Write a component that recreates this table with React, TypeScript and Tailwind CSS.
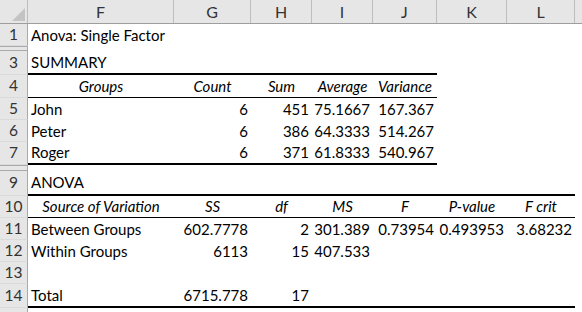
type Cell = {
  text?: string;
  align?: "left" | "center" | "right";
  italic?: boolean;
};

type Row = {
  num: string;
  h: string;
  cells?: Cell[];
  line?: "thin" | "thick";
  span?: number;
  hidden?: boolean;
};

const colWidths = ["w-[146px]", "w-[77px]", "w-[61px]", "w-[61px]", "w-[64px]", "w-[70px]", "w-[68px]"];
const colNames = ["F", "G", "H", "I", "J", "K", "L"];

const L = (text: string): Cell => ({ text, align: "left" });
const R = (text: string): Cell => ({ text, align: "right" });
const H = (text: string): Cell => ({ text, align: "center", italic: true });

const rows: Row[] = [
  { num: "1", h: "h-[22px]", cells: [L("Anova: Single Factor")] },
  { num: "2", h: "h-[5px]", hidden: true },
  { num: "3", h: "h-[24px]", cells: [L("SUMMARY")], line: "thick", span: 5 },
  { num: "4", h: "h-[23px]", cells: [H("Groups"), H("Count"), H("Sum"), H("Average"), H("Variance")], line: "thin", span: 5 },
  { num: "5", h: "h-[22px]", cells: [L("John"), R("6"), R("451"), R("75.1667"), R("167.367")] },
  { num: "6", h: "h-[22px]", cells: [L("Peter"), R("6"), R("386"), R("64.3333"), R("514.267")] },
  { num: "7", h: "h-[23px]", cells: [L("Roger"), R("6"), R("371"), R("61.8333"), R("540.967")], line: "thick", span: 5 },
  { num: "8", h: "h-[6px]", hidden: true },
  { num: "9", h: "h-[25px]", cells: [L("ANOVA")], line: "thick", span: 7 },
  { num: "10", h: "h-[22px]", cells: [H("Source of Variation"), H("SS"), H("df"), H("MS"), H("F"), H("P-value"), H("F crit")], line: "thin", span: 7 },
  { num: "11", h: "h-[22px]", cells: [L("Between Groups"), R("602.7778"), R("2"), R("301.389"), R("0.73954"), R("0.493953"), R("3.68232")] },
  { num: "12", h: "h-[22px]", cells: [L("Within Groups"), R("6113"), R("15"), R("407.533")] },
  { num: "13", h: "h-[22px]", cells: [] },
  { num: "14", h: "h-[24px]", cells: [L("Total"), R("6715.778"), R("17")], line: "thick", span: 7 },
  { num: "15", h: "h-[22px]", cells: [] },
];

const SheetRow = ({ row }: { row: Row }) => {
  if (row.hidden) {
    return (
      <div className={`flex ${row.h}`}>
        <div className="w-[28px] shrink-0 border-y border-r border-[#a9a9a9] bg-[#e6e6e6]" />
        <div className="flex-1" />
      </div>
    );
  }
  return (
    <div className={`flex ${row.h}`}>
      <div className="flex w-[28px] shrink-0 items-center justify-center border-r border-b border-r-[#a9a9a9] border-b-[#dadada] bg-[#e6e6e6] text-[15.5px] text-[#333]">
        {row.num}
      </div>
      {colWidths.map((w, i) => {
        const c = row.cells?.[i];
        const inLine = row.line && i < (row.span ?? 0);
        const line = inLine ? (row.line === "thick" ? "border-b-2 border-black" : "border-b border-black") : "";
        const align =
          c?.align === "right" ? "justify-end pr-[3px]" : c?.align === "center" ? "justify-center" : "justify-start pl-[3px]";
        return (
          <div key={i} className={`flex shrink-0 items-center whitespace-nowrap ${w} ${line} ${align} ${c?.italic ? "italic" : ""}`}>
            {c?.text}
          </div>
        );
      })}
      <div className="flex-1" />
    </div>
  );
}

export default function App() {
  return (
    <div className="h-[312px] w-[582px] overflow-hidden bg-white font-['Lato',sans-serif] text-[15px] text-black">
      {/* column headers */}
      <div className="flex h-[24px] border-b border-[#9e9e9e] bg-[#e6e6e6] text-[#333]">
        <div className="relative w-[28px] shrink-0 border-r border-[#bdbdbd]">
          <svg className="absolute left-[12px] top-[8px]" width="13" height="13" viewBox="0 0 13 13">
            <polygon points="13,0 13,13 0,13" fill="#c4c4c4" />
          </svg>
        </div>
        {colWidths.map((w, i) => (
          <div key={i} className={`flex shrink-0 items-center justify-center border-r border-[#bdbdbd] text-[16px] ${w}`}>
            {colNames[i]}
          </div>
        ))}
        <div className="flex-1" />
      </div>
      {rows.map((r) => (
        <SheetRow key={r.num} row={r} />
      ))}
    </div>
  );
}
